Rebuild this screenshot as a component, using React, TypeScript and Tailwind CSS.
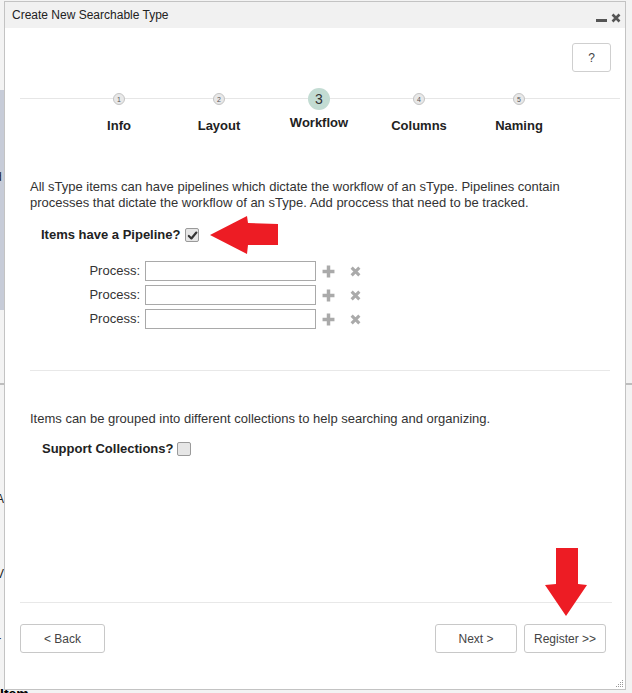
import React from 'react';

const steps = [
  { n: 1, label: 'Info' },
  { n: 2, label: 'Layout' },
  { n: 3, label: 'Workflow', active: true },
  { n: 4, label: 'Columns' },
  { n: 5, label: 'Naming' },
];

function Checkbox({ checked }: { checked?: boolean }) {
  return (
    <span className="inline-flex h-[14px] w-[14px] items-center justify-center rounded-[2px] border border-[#9a9a9a] bg-[#e6e6e6]">
      {checked && (
        <svg viewBox="0 0 12 12" className="h-[11px] w-[11px]">
          <path d="M2 6.5 L4.8 9.2 L10.2 2.8" fill="none" stroke="#333" strokeWidth="2.4" strokeLinecap="round" strokeLinejoin="round" />
        </svg>
      )}
    </span>
  );
}

function ProcessRow() {
  return (
    <div className="flex h-[20px] items-center">
      <span className="w-[136px] pr-px text-right text-[13px] text-[#333]">Process:</span>
      <input className="ml-[4px] h-[20px] w-[171px] border border-[#a9a9a9] bg-white outline-none" />
      <svg viewBox="0 0 12 12" className="ml-[6px] h-[13px] w-[13px]">
        <path d="M6 0.5 V11.5 M0.5 6 H11.5" stroke="#aaa" strokeWidth="3.2" />
      </svg>
      <svg viewBox="0 0 10 10" className="ml-[15px] h-[11px] w-[11px]">
        <path d="M1.5 1.5 L8.5 8.5 M8.5 1.5 L1.5 8.5" stroke="#aaa" strokeWidth="2.8" />
      </svg>
    </div>
  );
}

function Button({ children, className = '' }: { children: React.ReactNode; className?: string }) {
  return (
    <button className={`h-[29px] rounded-[3px] border border-[#c8c8c8] bg-white text-[12px] text-[#444] ${className}`}>
      {children}
    </button>
  );
}

export default function App() {
  return (
    <div className="relative h-[693px] w-[632px] overflow-hidden bg-[#f3f3f3] font-['Liberation_Sans',Arial,sans-serif]">
      {/* page behind the dialog */}
      <div className="absolute left-0 top-[90px] h-[220px] w-[6px] bg-[#c7ccd8]" />
      <div className="absolute left-0 top-[383px] h-[2px] w-full bg-[#bdbdbd]" />
      <span className="absolute left-[-4px] top-[152px] text-[12px] text-[#222]">r</span>
      <span className="absolute left-[-5px] top-[168px] text-[12px] text-[#222]">d</span>
      <span className="absolute left-[-4px] top-[490px] text-[12px] text-[#222]">A</span>
      <span className="absolute left-[-4px] top-[565px] text-[12px] text-[#222]">V</span>
      <span className="absolute left-[-3px] top-[632px] text-[12px] text-[#222]">r</span>
      <span className="absolute left-0 top-[684px] text-[14px] font-bold text-black">Item</span>

      {/* dialog */}
      <div className="absolute left-[4px] top-[1px] flex h-[689px] w-[622px] flex-col border border-[#c3c3c3] bg-white">
        <div className="flex h-[26px] items-center justify-between bg-[#f1f1f1] pl-[7px] pr-[4px]">
          <span className="text-[12px] text-[#222]">Create New Searchable Type</span>
          <div className="mt-[6px] flex items-center gap-[4px]">
            <span className="mt-[5px] h-[3px] w-[11px] bg-[#555]" />
            <svg viewBox="0 0 10 10" className="h-[10px] w-[10px]">
              <path d="M1.5 1.5 L8.5 8.5 M8.5 1.5 L1.5 8.5" stroke="#555" strokeWidth="2.6" />
            </svg>
          </div>
        </div>

        <div className="flex flex-1 flex-col">
          <button className="mr-[14px] mt-[15px] h-[29px] w-[39px] self-end rounded-[3px] border border-[#cfcfcf] bg-white text-[12px] text-[#444]">
            ?
          </button>

          {/* stepper */}
          <div className="relative mt-[16px] h-[46px]">
            <div className="absolute left-[15px] right-[5px] top-[10px] h-px bg-[#e6e6e6]" />
            <div className="relative ml-[64px] flex">
              {steps.map((s) => (
                <div key={s.n} className="flex w-[100px] flex-col items-center">
                  <div className="flex h-[22px] items-center">
                    {s.active ? (
                      <span className="flex h-[22px] w-[22px] items-center justify-center rounded-full bg-[#c3dcd3] text-[14px] text-[#333]">
                        {s.n}
                      </span>
                    ) : (
                      <span className="flex h-[12px] w-[12px] items-center justify-center rounded-full border border-[#c4c4c4] bg-[#e8e8e8] text-[7px] leading-none text-[#555]">
                        {s.n}
                      </span>
                    )}
                  </div>
                  <span className={`${s.active ? 'mt-[5px]' : 'mt-[8px]'} text-[13px] font-bold leading-[16px] text-[#222]`}>
                    {s.label}
                  </span>
                </div>
              ))}
            </div>
          </div>

          <p className="ml-[25px] mr-[20px] mt-[45px] text-[13px] leading-[16px] text-[#333]">
            All sType items can have pipelines which dictate the workflow of an sType. Pipelines contain processes that dictate the workflow of an sType. Add proccess that need to be tracked.
          </p>

          <div className="ml-[36px] mt-[16px] flex h-[16px] items-center gap-[5px]">
            <span className="text-[13px] font-bold text-[#222]">Items have a Pipeline?</span>
            <Checkbox checked />
          </div>

          <div className="mt-[18px] flex flex-col gap-[4px]">
            <ProcessRow />
            <ProcessRow />
            <ProcessRow />
          </div>

          <div className="ml-[25px] mr-[15px] mt-[41px] h-px bg-[#e8e8e8]" />

          <p className="ml-[25px] mt-[40px] text-[13px] leading-[16px] text-[#333]">
            Items can be grouped into different collections to help searching and organizing.
          </p>

          <div className="ml-[37px] mt-[14px] flex h-[16px] items-center gap-[4px]">
            <span className="text-[13px] font-bold text-[#222]">Support Collections?</span>
            <Checkbox />
          </div>

          <div className="mt-auto pb-[36px]">
            <div className="ml-[15px] mr-[13px] h-px bg-[#e8e8e8]" />
            <div className="ml-[15px] mr-[19px] mt-[21px] flex items-center">
              <Button className="w-[85px]">&lt; Back</Button>
              <div className="ml-auto flex gap-[7px]">
                <Button className="w-[82px]">Next &gt;</Button>
                <Button className="w-[82px]">Register &gt;&gt;</Button>
              </div>
            </div>
          </div>
        </div>

        {/* resize grip */}
        <svg viewBox="0 0 10 10" className="absolute bottom-[1px] right-[1px] h-[10px] w-[10px]">
          {[
            [8, 2], [8, 4], [6, 4], [8, 6], [6, 6], [4, 6], [8, 8], [6, 8], [4, 8], [2, 8],
          ].map(([x, y], i) => (
            <rect key={i} x={x} y={y} width="1" height="1" fill="#999" />
          ))}
        </svg>
      </div>

      {/* annotation arrows */}
      <svg className="absolute left-[208px] top-[215px] h-[40px] w-[72px]" viewBox="0 0 72 40">
        <path d="M2 20 L39 1 L40 8 L70 9 L70 30 L40 30 L39 39 Z" fill="#ed1c24" />
      </svg>
      <svg className="absolute left-[543px] top-[546px] h-[72px] w-[46px]" viewBox="0 0 46 72">
        <path d="M13 2 H35 V38 L44 39 L23 70 L2 39 L13 38 Z" fill="#ed1c24" />
      </svg>
    </div>
  );
}
